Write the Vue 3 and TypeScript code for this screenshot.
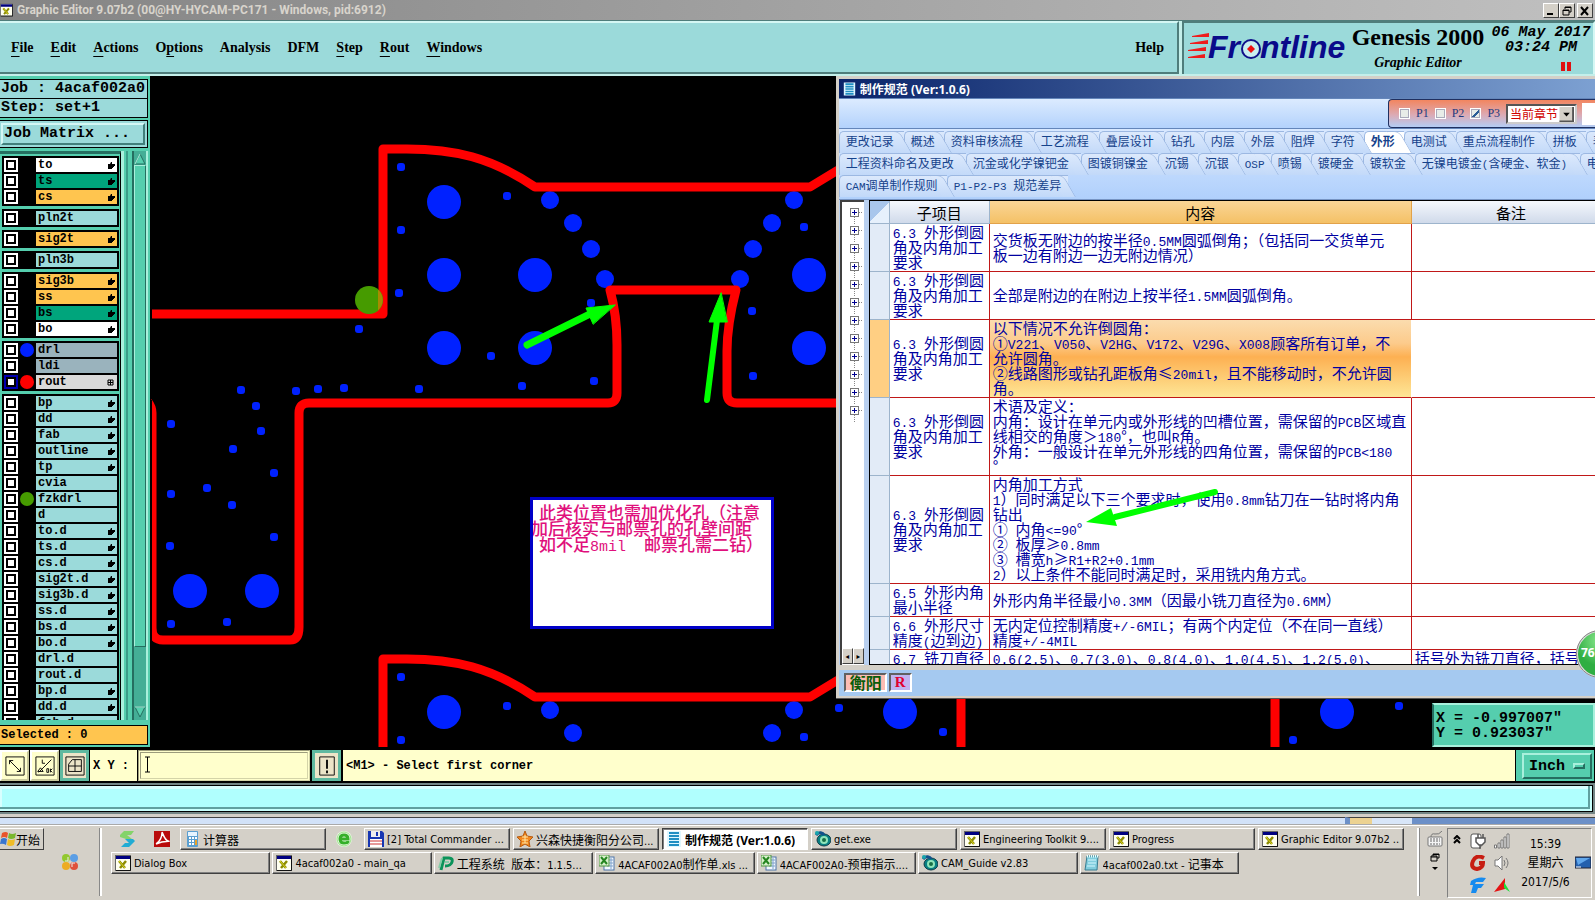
<script setup lang="ts">
import { h, ref } from 'vue'

// Splits text into CJK and Latin runs so that Latin characters are half the width of CJK ones.
const Mixed = (props: { text: string }) =>
  props.text
    .split(/([\x20-\x7e]+)/)
    .filter(Boolean)
    .map((part) => (/^[\x20-\x7e]/.test(part) ? h('span', { class: 'latin' }, part) : part))
Mixed.props = ['text']

const menus = [
  ['', 'F', 'ile'], ['', 'E', 'dit'], ['', 'A', 'ctions'], ['O', 'p', 'tions'], ['Analysis', '', ''],
  ['DFM', '', ''], ['', 'S', 'tep'], ['', 'R', 'out'], ['', 'W', 'indows'],
]

interface Layer { name: string; tone?: string; mark?: string; dot?: string; active?: boolean }
const layer = (name: string, tone = 'cyan', mark = '', dot = '', active = false): Layer => ({ name, tone, mark, dot, active })
const groups: Layer[][] = [
  [layer('to', 'white', 'hand'), layer('ts', 'green', 'hand'), layer('cs', 'amber', 'hand')],
  [layer('pln2t')],
  [layer('sig2t', 'amber', 'hand')],
  [layer('pln3b')],
  [layer('sig3b', 'amber', 'hand'), layer('ss', 'amber', 'hand'), layer('bs', 'green', 'hand'), layer('bo', 'white', 'hand')],
  [layer('drl', 'slate', '', 'blue'), layer('ldi', 'slate'), layer('rout', 'gray', 'grid', 'red', true)],
  [
    layer('bp', 'cyan', 'hand'), layer('dd', 'cyan', 'hand'), layer('fab', 'cyan', 'hand'), layer('outline', 'cyan', 'hand'),
    layer('tp', 'cyan', 'hand'), layer('cvia'), layer('fzkdrl', 'cyan', '', 'olive'), layer('d'), layer('to.d', 'cyan', 'hand'),
    layer('ts.d', 'cyan', 'hand'), layer('cs.d', 'cyan', 'hand'), layer('sig2t.d', 'cyan', 'hand'), layer('sig3b.d', 'cyan', 'hand'),
    layer('ss.d', 'cyan', 'hand'), layer('bs.d', 'cyan', 'hand'), layer('bo.d', 'cyan', 'hand'), layer('drl.d'), layer('rout.d'),
    layer('bp.d', 'cyan', 'hand'), layer('dd.d', 'cyan', 'hand'), layer('fab.d', 'cyan', 'hand'),
  ],
]

const bigHoles = [[444, 202], [444, 275], [444, 348], [535, 275], [535, 348], [809, 275], [809, 348], [190, 591], [262, 591], [444, 712], [900, 712], [1337, 712]]
const midHoles = [[550, 200], [573, 223], [591, 249], [605, 279], [794, 200], [772, 223], [753, 249], [740, 279], [550, 710], [573, 733], [794, 710], [772, 733]]
const smallHoles = [
  [401, 167], [507, 196], [401, 230], [399, 293], [359, 329], [591, 303], [491, 356], [804, 227], [752, 311], [753, 376],
  [241, 390], [296, 391], [318, 389], [344, 388], [419, 389], [522, 386], [594, 381], [256, 406], [261, 431], [171, 424],
  [233, 449], [274, 473], [207, 488], [171, 494], [232, 505], [274, 537], [170, 546], [171, 624], [227, 622], [401, 677],
  [507, 706], [401, 740], [804, 737], [839, 708], [943, 732], [1293, 740], [1399, 706],
]

const tabRows = [
  ['更改记录', '概述', '资料审核流程', '工艺流程', '叠层设计', '钻孔', '内层', '外层', '阻焊', '字符', '外形', '电测试', '重点流程制作', '拼板', '表面'],
  ['工程资料命名及更改', '沉金或化学镍钯金', '图镀铜镍金', '沉锡', '沉银', 'OSP', '喷锡', '镀硬金', '镀软金', '无镍电镀金(含硬金、软金)', '电金'],
  ['CAM调单制作规则', 'P1-P2-P3 规范差异'],
]
const activeTab = ref('外形')
const tabWidth = (label: string) => {
  const units = [...label].reduce((sum, c) => sum + (c.charCodeAt(0) < 128 ? 0.5 : 1), 0)
  return `${Math.floor(units * 12.5 + 15)}px`
}

const corner = ['6.3 外形倒圆', '角及内角加工', '要求']
const rows = [
  { item: corner, lines: ['交货板无附边的按半径0.5MM圆弧倒角；（包括同一交货单元', '板一边有附边一边无附边情况）'], note: '' },
  { item: corner, lines: ['全部是附边的在附边上按半径1.5MM圆弧倒角。'], note: '' },
  { item: corner, lines: ['以下情况不允许倒圆角：', '①V221、V050、V2HG、V172、V29G、X008顾客所有订单，不', '允许圆角。', '②线路图形或钻孔距板角≤20mil，且不能移动时，不允许圆', '角。'], note: '', active: true },
  { item: corner, lines: ['术语及定义：', '内角：设计在单元内或外形线的凹槽位置，需保留的PCB区域直', '线相交的角度＞180°，也叫R角。', '外角：一般设计在单元外形线的四角位置，需保留的PCB<180', '°'], note: '' },
  { item: corner, lines: ['内角加工方式', '1）同时满足以下三个要求时，使用0.8mm钻刀在一钻时将内角', '钻出', '① 内角<=90°', '② 板厚≥0.8mm', '③ 槽宽h≥R1+R2+0.1mm', '2）以上条件不能同时满足时，采用铣内角方式。'], note: '' },
  { item: ['6.5 外形内角', '最小半径'], lines: ['外形内角半径最小0.3MM（因最小铣刀直径为0.6MM）'], note: '' },
  { item: ['6.6 外形尺寸', '精度(边到边)'], lines: ['无内定位控制精度+/-6MIL；有两个内定位（不在同一直线）', '精度+/-4MIL'], note: '' },
  { item: ['6.7 铣刀直径'], lines: ['0.6(2.5)、0.7(3.0)、0.8(4.0)、1.0(4.5)、1.2(5.0)、'], note: '括号外为铣刀直径，括号内' },
]

const icons: Record<string, string> = {
  xwin: '<rect x=".5" y=".5" width="15" height="15" fill="#fffff0" stroke="#666"/><rect x="1" y="1" width="14" height="3" fill="#000080"/><path d="M4 6 10 13M11 6 5 13" stroke="#8c8c00" stroke-width="2.5"/><path d="M4 6 10 13" stroke="#e0d820"/><path d="M15.500 1v14.500H1" fill="none" stroke="#111"/>',
  calc: '<rect x="3" y="0" width="11" height="16" rx="1" fill="#5b9fd0"/><rect x="4" y="1" width="9" height="4" fill="#e6f4ff"/><path d="M5 7h2M8 7h2M11 7h2M5 10h2M8 10h2M11 10h2M5 13h2M8 13h2" stroke="#fff" stroke-width="2"/><path d="M12 9v5" stroke="#e8a22a" stroke-width="2"/>',
  ie: '<circle cx="8" cy="8" r="8" fill="#eafae4"/><circle cx="8" cy="8" r="7" fill="none" stroke="#9be08a"/><path d="M4 8h8Q12 4 8 4T4 8Q4 12 8 12T12 10" fill="none" stroke="#35b02a" stroke-width="3"/>',
  floppy: '<path d="M0 0h14l2 2v14H0Z" fill="#1736b2"/><rect x="3" y="0" width="9" height="6" fill="#eee"/><rect x="8" y="1" width="2" height="4" fill="#1736b2"/><rect x="2" y="8" width="12" height="8" fill="#fff"/><path d="M2 10h12M2 13h12" stroke="#c33"/>',
  star: '<path d="m8 0 2 5 6 1-4 4 1 6-5-3-5 3 1-6-4-4 6-1Z" fill="#f2861b" stroke="#b45a10"/><path d="M5 6h6M8 4v8M5 9h6M5 12h6" stroke="#ffe7a5"/>',
  doc: '<rect x="1" y="0" width="14" height="16" fill="#dff7ff"/><path d="M3 2h10M3 5h10M3 8h10M3 11h10M3 14h10" stroke="#208fc3" stroke-width="2"/>',
  cam: '<ellipse cx="9" cy="9" rx="7" ry="6" fill="#087f82" stroke="#123c48"/><circle cx="9" cy="9" r="4" fill="#8fe5ba"/><circle cx="9" cy="9" r="2" fill="#176f46"/><path d="M1 4c3-4 7-2 8 0" stroke="#12528b" stroke-width="3" fill="none"/><circle cx="2" cy="2" r="2" fill="#17a6ad"/>',
  pee: '<path d="M3 15 6 3h5q4 0 3 4t-7 4" fill="none" stroke="#0b9359" stroke-width="3"/><path d="m1 13 3-10M7 7h4" stroke="#86cda8" stroke-width="2"/>',
  xls: '<rect x="5" y="2" width="10" height="13" fill="#f3f8ff" stroke="#4d75a8"/><path d="M8 5h6M8 8h6M8 11h6M12 3v11" stroke="#7fa2cb"/><rect x="0" y="0" width="10" height="11" fill="#d8f1cb" stroke="#4f9340"/><path d="m2 2 6 7M8 2 2 9" stroke="#258520" stroke-width="2"/>',
  note: '<path d="M3 1h11l-1 14H1Z" fill="#81cddd" stroke="#397c91"/><path d="M4 5h8M4 8h8M3 11h8" stroke="#d5f8ff"/><path d="M3 1h11" stroke="#e9ffff" stroke-width="3" stroke-dasharray="1 1"/>',
  layer: '<path d="m1 4 4-4h10l-3 4H8l5 4H7L1 6Z" fill="#84d36a"/><path d="m6 8h8l2 2-6 6H2l4-4h4Z" fill="#22acd4"/>',
  pdf: '<rect width="16" height="16" fill="#b90b0b"/><path d="M2 13C6 11 8 5 8 2s2 7 6 8-4-1-12 3Z" fill="none" stroke="#fff" stroke-width="1.500"/>',
  win: '<path d="M2 2q4-2 6 0L7 7Q4 5 1 7Z" fill="#e9532b"/><path d="M9 2q3 2 7 0l-1 5q-4 2-7 0Z" fill="#7ab72c"/><path d="M1 8q3-2 6 0l-1 6q-3-2-6-1Z" fill="#3975ce"/><path d="M8 8q3 2 7 0l-1 6q-4 2-7 0Z" fill="#f0bc27"/>',
  balls: '<circle cx="4" cy="4" r="4" fill="#92c82f"/><circle cx="12" cy="4" r="4" fill="#5b9ee5"/><circle cx="4" cy="12" r="4" fill="#edac24"/><circle cx="12" cy="12" r="4" fill="#df503c"/><path d="M6 3v4H3M10 13V9h3" stroke="#eee" fill="none"/>',
  plug: '<rect x="1" y="1" width="10" height="14" rx="2" fill="#fff" stroke="#555"/><path d="M6 5h9v4l-3 3H9L6 9ZM8 5V1M13 5V1M10 12v4" fill="#fff" stroke="#555" stroke-width="1.500"/>',
  signal: '<path d="M.5 12h2v3h-2ZM4 10h2v5H4ZM7 7h2v8H7ZM10 4h2v11h-2ZM13 1h2v14h-2Z" fill="#fff" stroke="#777"/>',
  gee: '<path d="M14 3Q6-1 3 6T7 14Q13 13 13 8H9" fill="none" stroke="#c71d12" stroke-width="4"/>',
  sound: '<path d="M1 5h3l4-4v14l-4-4H1Z" fill="#fff" stroke="#777"/><path d="M10 5q2 3 0 6M12 3q4 5 0 10" fill="none" stroke="#777"/>',
  eff: '<path d="M1 4q7-5 15-3l-3 4H6l-1 2h9l-3 4H8l-2 5H1l2-8H0Z" fill="#168bef"/>',
  tri: '<path d="M0 15 11 1v11Z" fill="#e41313"/><path d="m10 5 6 10-6-4Z" fill="#1edd38"/>',
  screen: '<rect x="0" y="2" width="16" height="11" fill="#2460ae" stroke="#223"/><path d="M1 3h14L3 10Z" fill="#61a7ec"/><path d="M1 12h5" stroke="#fff"/>',
  keys: '<rect x="1" y="6" width="14" height="9" rx="1" fill="#f4f4f4" stroke="#777"/><path d="M3 8h10M3 10h10M3 13h10" stroke="#666" stroke-dasharray="2 1"/><path d="M4 6q0-4 4-3t7-3" stroke="#777" fill="none"/>',
}
const taskTop = [
  ['floppy', '[2] Total Commander ...'], ['star', '兴森快捷衡阳分公司...'], ['doc', '制作规范 (Ver:1.0.6)'], ['cam', 'get.exe'],
  ['xwin', 'Engineering Toolkit 9....'], ['xwin', 'Progress'], ['xwin', 'Graphic Editor 9.07b2 ...'],
]
const taskBottom = [
  ['xwin', 'Dialog Box'], ['xwin', '4acaf002a0 - main_qa'], ['pee', '工程系统  版本：1.1.5...'], ['xls', '4ACAF002A0制作单.xls ...'],
  ['xls', '4ACAF002A0-预审指示....'], ['cam', 'CAM_Guide v2.83'], ['note', '4acaf002a0.txt - 记事本'],
]
const xy = ref('')
const phases = ref([{ name: 'P1', on: false }, { name: 'P2', on: false }, { name: 'P3', on: true }])
</script>

<template>
  <div class="desktop">
    <header class="titlebar">
      <svg class="appicon" viewBox="0 0 16 16" v-html="icons.xwin"></svg>
      <span>Graphic Editor 9.07b2 (00@HY-HYCAM-PC171 - Windows, pid:6912)</span>
      <div class="winbuttons">
        <button aria-label="Minimize"><svg viewBox="0 0 12 10"><path d="M2 8h6" stroke="#000" stroke-width="2" /></svg></button>
        <button aria-label="Restore"><svg viewBox="0 0 12 10"><path d="M4 3V1h6v5H8M4 1.500h6M2 4h6v5H2ZM2 4.500h6" fill="none" stroke="#000" /></svg></button>
        <button class="close" aria-label="Close"><svg viewBox="0 0 12 10"><path d="m2 1 7 8M9 1 2 9" stroke="#000" stroke-width="2" /></svg></button>
      </div>
    </header>

    <div class="top">
      <nav class="menubar">
        <button v-for="m in menus" :key="m.join('')">{{ m[0] }}<u>{{ m[1] }}</u>{{ m[2] }}</button>
        <button class="help">Help</button>
      </nav>
      <div class="brand">
        <svg class="logo" viewBox="0 0 162 34" role="img" aria-label="Frontline">
          <path d="M4 6l17-3v4H4ZM2 13l18-3v4H2ZM0 20l18-3v4H0ZM0 27l17-3v4H0Z" fill="#ee1c1c" />
          <text x="20" y="28" class="logotext">Fr</text>
          <circle cx="63" cy="19" r="9" fill="#c9eef0" stroke="#10108a" stroke-width="2" />
          <path d="m63 15 4 4-4 4-4-4Z" fill="#ee1010" />
          <text x="72" y="28" class="logotext">ntline</text>
        </svg>
        <div class="product"><strong>Genesis 2000</strong><em>Graphic Editor</em></div>
        <div class="clock"><span>06 May 2017</span><span>03:24 PM</span><i></i></div>
      </div>
    </div>

    <main class="work">
      <aside class="side">
        <div class="job"><div>Job : 4acaf002a0</div><div>Step: set+1</div></div>
        <div class="matrix"><button>Job Matrix ...</button></div>
        <div class="layers">
          <div class="list">
            <div v-for="(g, gi) in groups" :key="gi" class="group">
              <div v-for="l in g" :key="l.name" class="layer">
                <label class="tick" :class="{ on: l.active }"><input type="checkbox" :aria-label="l.name" /></label>
                <span class="slot"><i v-if="l.dot" :class="l.dot"></i></span>
                <button class="name" :class="l.tone">
                  {{ l.name }}
                  <svg v-if="l.mark === 'hand'" viewBox="0 0 8 8"><path d="M1 3h2l1-2h1v2h3v2H7v1H6v1H5v1H1Z" fill="#000" /></svg>
                  <svg v-if="l.mark === 'grid'" viewBox="0 0 8 8"><path d="M1 2h5v5H1ZM3.500 2v5M1 4.500h5" fill="none" stroke="#000" /></svg>
                </button>
              </div>
            </div>
          </div>
          <div class="rail"></div>
          <div class="scroll">
            <svg viewBox="0 0 12 12"><path d="M6 1 1 11h10Z" fill="#55ceae" stroke="#256e60" /><path d="M6 1 1 11" stroke="#b0f5e2" /></svg>
            <div class="thumb"></div>
            <svg viewBox="0 0 12 12"><path d="M6 11 1 1h10Z" fill="#55ceae" stroke="#256e60" /><path d="M1 1h10" stroke="#b0f5e2" /></svg>
          </div>
        </div>
        <div class="selected">Selected : 0</div>
      </aside>

      <section class="canvas">
        <svg class="board" aria-hidden="true">
          <g transform="translate(-150 -76)">
            <g fill="#0021ff">
              <circle v-for="(c, i) in bigHoles" :key="'b' + i" :cx="c[0]" :cy="c[1]" r="17" />
              <circle v-for="(c, i) in midHoles" :key="'m' + i" :cx="c[0]" :cy="c[1]" r="9" />
              <rect v-for="(c, i) in smallHoles" :key="'s' + i" :x="c[0] - 4" :y="c[1] - 4" width="8" height="8" rx="3" />
            </g>
            <g fill="none" stroke="#f00" stroke-width="9" stroke-linejoin="round">
              <path d="M152 314H383V149H400C455 148 492 158 535 187H810L838 170" />
              <path d="M383 747V659H400C455 658 492 668 535 697H810L838 680" />
              <path d="M299 627V413Q299 403 309 403H608Q617 403 617 393V345Q617 315 610 290H736Q727 325 727 351V393Q727 403 737 403H840" />
              <path d="M299 627Q299 640 290 640H163Q152 640 152 628V413Q152 407 148 402" />
              <path d="M961 690V747M1275 690V747" />
            </g>
            <rect x="150" y="400" width="2" height="250" fill="#000" />
            <circle cx="369" cy="300" r="14" fill="#469b00" />
            <path d="M378 289.500A14 14 0 0 1 378 310.500Z" fill="#a88b00" />
            <g fill="#0f0" stroke="#0f0" stroke-linecap="round">
              <path d="m527 345 65-32" stroke-width="7" /><path d="m615 305-29 3 7 16Z" stroke-width="1" />
              <path d="m707 400 10-80" stroke-width="6" /><path d="m721 293-12 29h18Z" stroke-width="1" />
            </g>
          </g>
        </svg>
        <div class="memo"><p class="lead"><Mixed text="此类位置也需加优化孔（注意" /></p><p>加后核实与邮票孔的孔壁间距</p><p class="lead"><Mixed text="如不足8mil  邮票孔需二钻）" /></p></div>
        <div class="coords"><div>X = -0.997007"</div><div>Y = 0.923037"</div></div>
      </section>

      <section class="window">
        <div class="wtitle"><svg class="appicon" viewBox="0 0 16 16" v-html="icons.doc"></svg><span>制作规范 (Ver:1.0.6)</span></div>
        <div class="wtool">
          <div class="filter">
            <label v-for="p in phases" :key="p.name"><input v-model="p.on" type="checkbox" />{{ p.name }}</label>
            <div class="pick">
              <select aria-label="章节范围"><option>当前章节</option></select>
              <svg viewBox="0 0 15 16" aria-hidden="true"><path d="M0 0h15v16H0Z" fill="#d4d0c8" /><path d="M14.500 0v15.500H0" fill="none" stroke="#555" stroke-width="2" /><path d="M4 6h7L7.500 10Z" /></svg>
            </div>
            <input class="find" type="text" aria-label="查找" />
          </div>
        </div>
        <div class="tabs">
          <div v-for="(r, i) in tabRows" :key="i" class="tabrow">
            <button v-for="t in r" :key="t" class="tab" :class="{ on: t === activeTab }" :style="{ width: tabWidth(t) }" @click="activeTab = t"><span><Mixed :text="t" /></span></button>
          </div>
        </div>
        <div class="wbody">
          <div class="tree">
            <button v-for="n in 12" :key="n" :aria-label="'展开 ' + n"><svg viewBox="0 0 14 18"><path d="M4.500 10v8M9 5.500h4" stroke="#888" stroke-dasharray="1 1" /><rect x=".5" y="1.500" width="8" height="8" fill="#fff" stroke="#777" /><path d="M2 5.500h5M4.500 3v5" stroke="#000090" /></svg></button>
            <div class="treescroll"><button aria-label="左">◂</button><button aria-label="右">▸</button></div>
          </div>
          <div class="grid">
            <table>
              <colgroup><col class="c0" /><col class="c1" /><col class="c2" /><col /></colgroup>
              <thead><tr><th class="cornercell"></th><th>子项目</th><th class="hot">内容</th><th>备注</th></tr></thead>
              <tbody>
                <tr v-for="(r, i) in rows" :key="i" :class="{ active: r.active }">
                  <td class="rowhead"></td>
                  <td><div v-for="t in r.item" :key="t"><Mixed :text="t" /></div></td>
                  <td class="content"><div v-for="t in r.lines" :key="t"><Mixed :text="t" /></div></td>
                  <td><Mixed :text="r.note" /></td>
                </tr>
              </tbody>
            </table>
          </div>
        </div>
        <div class="wstatus"><span class="site">衡阳</span><span class="flag">R</span></div>
        <svg class="pointer" viewBox="0 0 136 42" aria-hidden="true"><path d="m131 8-100 25" stroke="#0f0" stroke-width="6" stroke-linecap="round" /><path d="m2 38 25-14 6 18Z" fill="#0f0" /></svg>
      </section>
      <div class="badge">76</div>
    </main>

    <div class="command">
      <button class="tool" aria-label="Zoom"><svg viewBox="0 0 22 22"><path d="M1 1h20v20H1ZM5 5l12 12M5 9V5h4M13 17h4v-4" fill="none" stroke="#000" /></svg></button>
      <button class="tool" aria-label="Snap"><svg viewBox="0 0 22 22"><path d="M1 1h20v20H1ZM4 18 18 4M8 4v4h3M3 17h6l-3-4ZM13 14v4h2v-4ZM17 14v4m2-4-2 2 2 2" fill="none" stroke="#000" /></svg></button>
      <button class="tool teal" aria-label="Grid"><svg viewBox="0 0 22 22"><path d="M1 1h20v20H1ZM4 17V9l4-5h10v13ZM4 11h14M11 4v13" fill="none" stroke="#000" /></svg></button>
      <label for="xy">X Y :</label>
      <div class="entry"><svg viewBox="0 0 7 18" aria-hidden="true"><path d="M1 1h5M1 16h5M3.500 1v15" stroke="#000" /></svg><input id="xy" v-model="xy" type="text" /></div>
      <button class="tool teal bang" aria-label="Alert"><svg viewBox="0 0 22 22"><path d="M3 1h16v20H3Z" fill="none" stroke="#000" /><path d="M11 4v10M11 16v3" stroke="#000" stroke-width="2" /></svg></button>
      <div class="message">&lt;M1&gt; - Select first corner</div>
      <div class="unit"><button>Inch<i></i></button></div>
    </div>
    <div class="cyanbar"><div></div></div>
    <div class="edge"><i></i></div>

    <footer class="taskbar">
      <div class="startcol">
        <button class="start"><svg viewBox="0 0 16 16" v-html="icons.win"></svg>开始</button>
        <svg class="balls" viewBox="0 0 16 16" v-html="icons.balls"></svg>
      </div>
      <div class="tasks">
        <div class="taskrow">
          <svg class="quick" viewBox="0 0 16 16" v-html="icons.layer"></svg>
          <svg class="quick" viewBox="0 0 16 16" v-html="icons.pdf"></svg>
          <button class="task"><svg viewBox="0 0 16 16" v-html="icons.calc"></svg><span>计算器</span></button>
          <svg class="quick" viewBox="0 0 16 16" v-html="icons.ie"></svg>
          <button v-for="t in taskTop" :key="t[1]" class="task" :class="{ pressed: t[0] === 'doc' }"><svg viewBox="0 0 16 16" v-html="icons[t[0]]"></svg><span><Mixed :text="t[1]" /></span></button>
        </div>
        <div class="taskrow second">
          <button v-for="t in taskBottom" :key="t[1]" class="task"><svg viewBox="0 0 16 16" v-html="icons[t[0]]"></svg><span><Mixed :text="t[1]" /></span></button>
        </div>
      </div>
      <div class="ime">
        <svg viewBox="0 0 16 16" v-html="icons.keys"></svg>
        <svg class="small" viewBox="0 0 10 20"><path d="M3 3V1h6v4H7M1 3h6v5H1ZM1 4h6M3 1.500h6" fill="none" stroke="#000" /><path d="M2 14h6l-3 3Z" /></svg>
      </div>
      <div class="tray">
        <svg class="more" viewBox="0 0 8 10"><path d="m1 4 3-3 3 3M1 8l3-3 3 3" fill="none" stroke="#000" stroke-width="2" /></svg>
        <div class="trayicons"><svg v-for="k in ['plug', 'signal', 'gee', 'sound', 'eff', 'tri']" :key="k" viewBox="0 0 16 16" v-html="icons[k]"></svg></div>
        <div class="time"><span>15:39</span><span>星期六</span><span>2017/5/6</span></div>
        <svg viewBox="0 0 16 16" v-html="icons.screen"></svg>
      </div>
    </footer>
  </div>
</template>

<style>
body { margin: 0; overflow: hidden; }
.latin { font-family: "Liberation Mono", monospace; font-size: 13px; line-height: 0; }
.tab .latin { font-size: 11px; }
.memo .latin { font-size: 15px; }
.task .latin { font-family: "DejaVu Sans Condensed", sans-serif; font-size: 11px; }
.pressed .latin { font-family: "Noto Sans", sans-serif; font-size: 12px; }
</style>

<style scoped>
* { box-sizing: border-box; }
button { font: inherit; color: inherit; border: 0; padding: 0; margin: 0; background: none; text-align: left; border-radius: 0; }
svg { display: block; flex: none; }
.desktop { display: flex; flex-direction: column; height: 100vh; overflow: hidden; color: #000; background: #d4d0c8; font-family: "DejaVu Sans Condensed", "Noto Sans CJK SC", sans-serif; font-size: 12px; }

.titlebar { display: flex; align-items: center; gap: 4px; height: 20px; flex: none; padding-right: 2px; background: linear-gradient(90deg, #848484, #c0c0c0); color: #d8d4cc; font: bold 12px Roboto, sans-serif; }
.appicon { width: 13px; height: 14px; }
.winbuttons { margin-left: auto; display: flex; }
.winbuttons button { width: 16px; height: 15px; padding: 2px 1px; background: #d4d0c8; border: 1px solid; border-color: #fff #404040 #404040 #fff; }
.winbuttons svg { width: 12px; height: 10px; }
.winbuttons .close { margin-left: 2px; }

.top { display: flex; height: 56px; flex: none; gap: 3px; background: #c4efea; border-top: 1px solid #4f7d7b; }
.menubar { flex: 1; display: flex; align-items: center; gap: 17px; padding: 0 13px 0 11px; background: #9bdada; border: 2px solid; border-color: #d4f7f4 #4f7d7b #4f7d7b #9bdada; border-left: 0; margin-bottom: 2px; font: bold 14px "Liberation Serif", serif; }
.menubar u { text-underline-offset: 4px; }
.help { margin-left: auto; }
.brand { display: flex; width: 413px; margin-bottom: 2px; background: #9bdada; border-left: 2px solid #4f7d7b; border-top: 2px solid #4f7d7b; border-right: 2px solid #d4f7f4; padding-left: 4px; }
.logo { width: 162px; height: 34px; margin-top: 7px; }
.logotext { font: italic bold 32px "Liberation Sans", sans-serif; fill: #0a0a8a; }
.product { display: flex; flex-direction: column; align-items: center; width: 136px; font-family: "Liberation Serif", serif; font-weight: bold; }
.product strong { font-size: 24px; line-height: 28px; white-space: nowrap; }
.product em { font-size: 14px; line-height: 24px; }
.clock { display: flex; flex-direction: column; align-items: center; width: 106px; padding: 2px 0 0 4px; font: italic 15px/15px "Liberation Mono", monospace; font-weight: bold; white-space: nowrap; }
.clock i { width: 10px; height: 9px; margin: 7px 0 0 50px; border: solid #e01010; border-width: 0 4px; }

.work { position: relative; flex: 1; min-height: 0; display: flex; background: #000; overflow: hidden; }
.side { width: 150px; flex: none; display: flex; flex-direction: column; margin-bottom: 2px; padding: 3px 2px 2px 0; background: #55ceae; font: bold 15px "Liberation Mono", monospace; overflow: hidden; }
.job { border: 1px solid #000; border-left: 0; background: #9bdada; }
.job div { height: 18px; line-height: 17px; padding-left: 1px; white-space: pre; }
.job div + div { border-top: 1px solid #000; height: 19px; }
.matrix { margin-top: 2px; border: 1px solid #000; border-left: 0; padding: 2px 2px 2px 1px; background: #9bdada; }
.matrix button { display: block; width: 100%; height: 22px; line-height: 18px; padding-left: 1px; border: 2px solid; border-color: #d4f7f4 #417f7b #417f7b #d4f7f4; }
.layers { flex: 1; min-height: 0; display: flex; margin-top: 3px; }
.list { width: 122px; overflow: hidden; padding: 2px 0 0 2px; border-top: 3px solid #256e60; border-right: 1px solid #000; }
.group { width: 117px; padding: 2px; margin-bottom: 3px; background: #000; display: grid; gap: 2px; }
.layer { display: flex; height: 14px; }
.tick { width: 14px; background: #fff; padding: 2px; }
.tick input { appearance: none; display: block; margin: 0; width: 10px; height: 10px; border: 2px solid #000; background: #fff; }
.tick.on { background: #0000b0; }
.slot { width: 18px; display: flex; align-items: center; justify-content: center; }
.slot i { width: 14px; height: 14px; border-radius: 50%; }
.blue { background: #0021ff; } .red { background: #f00; } .olive { background: #469b00; }
.name { flex: 1; display: flex; align-items: center; justify-content: space-between; height: 14px; padding: 0 2px; font-size: 12px; line-height: 13px; }
.name svg { width: 8px; height: 8px; }
.cyan { background: #9bdada; } .white { background: #fff; } .green { background: #00a57c; } .amber { background: #ffc54f; } .slate { background: #9ab3bd; } .gray { background: #dadada; }
.rail { width: 7px; border: solid; border-width: 0 2px 0 3px; border-color: #a8f0dc #3b9c88 #3b9c88 #a8f0dc; }
.scroll { flex: 1; margin-left: 4px; display: flex; flex-direction: column; align-items: center; padding: 2px 0; background: #44ae96; border-left: 2px solid #256e60; border-right: 2px solid #a8f0dc; }
.scroll svg { width: 12px; height: 12px; }
.thumb { width: 100%; height: 482px; background: #55ceae; border: 1px solid; border-color: #a8f0dc #256e60 #256e60 #a8f0dc; margin-bottom: auto; }
.selected { margin-top: 5px; height: 20px; line-height: 18px; border: 1px solid #000; border-left: 0; background: #ffc54f; padding-left: 1px; font-size: 12px; }

.canvas { position: relative; flex: 1; overflow: hidden; }
.board { position: absolute; inset: 0; width: 100%; height: 100%; }
.memo { position: absolute; left: 380px; top: 421px; width: 244px; height: 132px; padding: 4px 0; background: #fff; border: 3px solid #0000c8; color: #e0107c; font: 500 17px/16px "Noto Sans CJK SC", sans-serif; white-space: pre; overflow: hidden; }
.memo p { margin: 0 0 0 -2px; }
.memo .lead { margin-left: 6px; }
.coords { position: absolute; right: 0; bottom: 2px; width: 163px; height: 44px; padding: 6px 2px; background: #55ceae; border: 2px solid; border-color: #a8f0dc #a8f0dc #a8f0dc #256e60; font: bold 15px/15px "Liberation Mono", monospace; white-space: pre; }

.window { position: absolute; left: 52.4%; right: -16px; top: 0; bottom: 50px; display: flex; flex-direction: column; padding: 3px 0 2px 3px; background: #d4d0c8; border-bottom: 1px solid #555; }
.wtitle { display: flex; align-items: center; gap: 4px; height: 19px; flex: none; padding-left: 4px; background: linear-gradient(90deg, #0a246a, #7fa3d4); color: #fff; font: bold 12px "Noto Sans", "Noto Sans CJK SC", sans-serif; }
.wtool { display: flex; justify-content: flex-end; height: 31px; flex: none; background: linear-gradient(#dcebff, #b3d2fc); border-top: 1px solid #6486ba; border-bottom: 1px solid #6486ba; }
.filter { display: flex; align-items: center; width: 223px; padding-left: 10px; background: linear-gradient(#f2855f, #dcaab4 55%, #b3cdf5); border: solid #203060; border-width: 1px 0 1px 1px; border-radius: 4px 0 0 4px; color: #1c3a80; }
.filter label { display: flex; align-items: center; gap: 6px; margin-right: 6px; font: 12px "Liberation Serif", serif; }
.filter label input { appearance: none; width: 11px; height: 11px; margin: 0; border: 1px solid #fff; outline: 1px solid #aab; outline-offset: -2px; background: #e8ece8; }
.filter label input:checked { background: linear-gradient(135deg, #e8ece8 45%, #2c5c96 45% 65%, #e8ece8 65%); }
.pick { display: flex; width: 75px; height: 20px; padding: 1px; background: #fff; border: 2px solid #555; border-color: #555 #ccc #ccc #555; }
.pick select { appearance: none; flex: 1; min-width: 0; border: 0; padding: 0 0 0 1px; background: #fff; color: #d00000; font: 12px/14px "Noto Sans CJK SC", sans-serif; }
.pick svg { width: 15px; height: 15px; }
.find { width: 30px; height: 22px; margin-left: 5px; border: 0; padding: 0; background: #fff; }
.tabs { flex: none; padding: 2px 0; background: linear-gradient(#d8e8ff, #b0d0fc); border-bottom: 1px solid #7795c4; }
.tabrow { display: flex; height: 22px; overflow: hidden; }
.tab { position: relative; flex: none; height: 22px; padding: 0 0 4px 6px; white-space: pre; color: #15428b; font: 12px/16px "Noto Sans CJK SC", sans-serif; border-left: 1px solid #9cb8e2; border-top: 1px solid #9cb8e2; border-top-left-radius: 5px; background: linear-gradient(#dce9fc, #c2d9f9); }
.tab span { position: relative; z-index: 2; }
.tab::after { content: ""; position: absolute; right: -2px; top: -1px; width: 12px; height: 22px; transform: skewX(30deg); border-right: 1px solid #9cb8e2; border-top: 1px solid #9cb8e2; border-top-right-radius: 6px; background: linear-gradient(#dce9fc, #c2d9f9); z-index: 1; }
.tab.on, .tab.on::after { background: #fff; }
.tab.on { font-weight: bold; }
.wbody { flex: 1; min-height: 0; display: flex; background: #b9d0f0; padding-left: 1px; }
.tree { width: 24px; margin-right: 5px; background: #fff; border: solid #404040; border-width: 2px 0 0 2px; display: flex; flex-direction: column; padding: 5px 0 1px 8px; overflow: hidden; }
.tree > button { height: 18px; }
.tree > button svg { width: 14px; height: 18px; }
.treescroll { display: flex; margin: auto 0 0 -8px; }
.treescroll button { width: 11px; height: 16px; font-size: 8px; text-align: center; background: #d4d0c8; border: 1px solid; border-color: #fff #404040 #404040 #fff; }
.grid { flex: 1; min-width: 0; overflow: hidden; border: solid #000; border-width: 1px 0 1px 1px; background: #fff; }
table { width: 100%; table-layout: fixed; border-collapse: separate; border-spacing: 0; color: #0000a0; font: 15px/15px "Noto Sans CJK SC", sans-serif; }
.c0 { width: 20px; } .c1 { width: 100px; } .c2 { width: 422px; }
th { height: 23px; padding: 0; font-weight: normal; color: #000; background: linear-gradient(#f5f8fd, #d0daea); border-right: 1px solid #9db4cc; border-bottom: 1px solid #9db4cc; }
th.hot { background: linear-gradient(#fad596, #f4c166); border-color: #e2a24a; }
.cornercell { background: linear-gradient(135deg, #a8c6ec 50%, #e6f0fc 50%); }
td { padding: 0 0 2px 3px; white-space: pre; vertical-align: middle; border-right: 1px solid #c01818; border-bottom: 1px solid #c01818; }
td.rowhead { background: #e2ebf7; border-color: #9db4cc; }
.active .rowhead { background: #ffcf83; }
.active .content { background: linear-gradient(#fbdcae, #fccb8c 30%, #fdb052 48%, #fdc268 65%, #fee696); border-right-color: #fff; }
.wstatus { height: 31px; flex: none; display: flex; gap: 2px; padding: 3px 0 4px 5px; background: #a5c9f0; border-top: 5px solid #d4d0c8; }
.wstatus span { height: 19px; border: 2px solid; border-color: #606060 #fff #fff #606060; line-height: 15px; }
.site { width: 43px; padding-left: 4px; background: #fcbcb4; color: #0a5c0a; font: bold 16px "Noto Sans CJK SC", sans-serif; }
.flag { width: 23px; text-align: center; background: #c0b4f0; color: #e00030; font: bold 15px "Liberation Serif", serif; }
.pointer { position: absolute; left: 248px; top: 408px; width: 136px; height: 42px; }
.badge { position: absolute; right: -29px; top: 554px; width: 48px; height: 48px; padding-left: 3px; border-radius: 50%; border: 2px solid #ddd; outline: 1px solid #888; outline-offset: -1px; background: radial-gradient(circle at 50% 20%, #8be88e, #2fae42 60%); color: #fff; font: bold 12px/42px "Noto Sans", sans-serif; }

.command { display: flex; height: 34px; flex: none; gap: 1px; background: #000; border-top: 1px solid #000; border-bottom: 2px solid #000; font: bold 12px "Liberation Mono", monospace; }
.tool { width: 29px; background: #ffffcc; border: 2px solid; border-color: #fff #c8c89c #c8c89c #fff; display: flex; align-items: center; justify-content: center; }
.tool svg { width: 20px; height: 22px; }
.tool.teal { background: #ece5c8; border: 3px solid #5fb9a0; }
.command label { width: 47px; padding-left: 3px; background: #ffffcc; line-height: 32px; white-space: pre; }
.entry { display: flex; width: 172px; padding: 3px; background: #ffffcc; border: 3px solid; border-color: #9c9c7c #d4d4a8 #d4d4a8 #9c9c7c; outline: 1px solid #ffffcc; outline-offset: -2px; }
.entry svg { width: 7px; height: 18px; }
.entry input { flex: 1; min-width: 0; border: 0; padding: 0; background: transparent; font: inherit; outline: 0; }
.bang { margin: 0 1px; }
.message { flex: 1; background: #ffffcc; padding-left: 3px; line-height: 32px; white-space: pre; }
.unit { width: 78px; padding: 3px 2px 3px 6px; margin-right: 1px; background: #55ceae; }
.unit button { display: flex; align-items: center; justify-content: space-between; width: 100%; height: 26px; padding: 0 5px; font-size: 15px; border: 2px solid; border-color: #a8f0dc #256e60 #256e60 #a8f0dc; }
.unit i { width: 12px; height: 6px; border: 2px solid; border-color: #a8f0dc #256e60 #256e60 #a8f0dc; }
.cyanbar { height: 31px; flex: none; padding: 2px 2px 2px 0; background: #738686; }
.cyanbar div { height: 27px; border: solid #000; border-width: 1px 1px 1px 0; padding: 0; background: #b0fffe; box-shadow: inset -2px -2px #c8fffc, inset -4px -4px #60a0a0, inset 2px 3px #d8ffff; }
.edge { height: 11px; flex: none; display: flex; justify-content: flex-end; background: #d2e2f8; border-top: 3px solid #d4d0c8; border-bottom: 1px solid #aaa; box-shadow: inset 0 1px #444; }
.edge i { width: 250px; background: linear-gradient(90deg, #ecd290 8px 22px, #d8e6f8 22px 62px, #6c90c8 62px); border-left: 5px solid #6c90c8; border-top: 1px solid #444; }

.taskbar { display: flex; height: 75px; flex: none; padding-top: 2px; border-top: 1px solid #fff; background: #d4d0c8; }
.startcol { width: 102px; margin-bottom: 4px; border-right: 2px solid #fff; box-shadow: inset -1px 0 #888; }
.start { display: flex; align-items: center; width: 44px; height: 22px; font-size: 12px; border: 1px solid; border-color: #fff #404040 #404040 #fff; border-left: 0; white-space: nowrap; }
.start svg, .balls, .quick, .task svg { width: 16px; height: 16px; }
.balls { margin: 4px 0 0 62px; }
.tasks { flex: 1; min-width: 0; padding: 0 13px 0 9px; }
.taskrow { display: flex; gap: 3px; height: 22px; align-items: center; }
.second { margin-top: 2px; padding-right: 165px; gap: 2px; }
.quick { margin: 0 8px; }
.quick + .quick { margin: 0 7px 0 8px; }
.task + .quick { margin: 0 9px 0 7px; }
.task { flex: 1 1 0; min-width: 0; height: 22px; display: flex; align-items: center; gap: 3px; padding: 0 3px; border: 1px solid; border-color: #fff #404040 #404040 #fff; box-shadow: inset -1px -1px #808080; }
.task span { overflow: hidden; white-space: pre; }
.pressed { background: #fff; font-weight: bold; border-color: #404040 #fff #fff #404040; box-shadow: inset 1px 1px #808080; }
.ime { width: 30px; display: flex; flex-direction: column; align-items: center; gap: 6px; margin-bottom: 4px; padding: 3px 0 0 4px; border-left: 2px solid #fff; box-shadow: inset 1px 0 #888; }
.ime svg { width: 16px; height: 16px; }
.ime .small { width: 10px; height: 20px; }
.tray { display: flex; align-items: center; width: 145px; margin: 0 3px 2px 0; padding: 0 0 0 5px; border: 1px solid; border-color: #808080 #fff #fff #808080; }
.tray > svg { width: 16px; height: 16px; }
.tray .more { width: 8px; height: 10px; align-self: flex-start; margin-top: 6px; }
.trayicons { display: grid; grid-template-columns: 16px 16px; gap: 6px 8px; margin: 0 6px 0 9px; }
.trayicons svg { width: 16px; height: 16px; }
.time { flex: 1; display: flex; flex-direction: column; align-items: center; line-height: 19px; font-size: 12px; }
</style>
